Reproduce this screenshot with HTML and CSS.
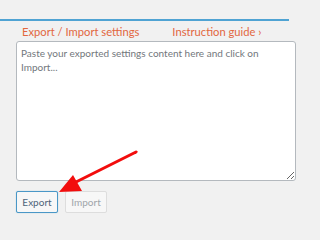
FILE: index.html
```html
<!DOCTYPE html>
<html>
<head>
<meta charset="utf-8">
<link rel="stylesheet" href="styles.css">
</head>
<body>
<div class="page">
  <div class="topbar"></div>
  <div class="tabs">
    <span class="tab">Export / Import settings</span>
    <span class="tab guide">Instruction guide ›</span>
  </div>
  <textarea class="box" placeholder="Paste your exported settings content here and click on Import..."></textarea>
  <div class="actions">
    <button class="btn primary">Export</button>
    <button class="btn" disabled>Import</button>
  </div>
  <svg class="arrow" width="300" height="223" viewBox="0 0 300 223">
    <line x1="136" y1="152" x2="72" y2="184" stroke="#f20d0d" stroke-width="3" stroke-linecap="round"/>
    <polygon points="59,192 73,175 82,191" fill="#f20d0d"/>
  </svg>
</div>
</body>
</html>
```
FILE: styles.css
```css
html, body {
  margin: 0;
  padding: 0;
  background: #f1f1f1;
}
.page {
  position: relative;
  width: 300px;
  height: 223px;
  overflow: hidden;
  font-family: Lato, "Open Sans", "Liberation Sans", sans-serif;
}
.topbar {
  width: 289px;
  height: 19px;
  border-bottom: 2px solid #4fa3d3;
}
.tabs {
  display: flex;
  padding-left: 22px;
  height: 20px;
  align-items: center;
  font-size: 11.2px;
  color: #e2673f;
}
.guide {
  margin-left: 33px;
}
.box {
  display: block;
  box-sizing: border-box;
  margin: 0 0 0 16px;
  width: 280px;
  height: 140px;
  border: 1px solid #b4b9be;
  border-radius: 3px;
  background: #fff;
  padding: 4px 4px;
  font-family: Lato, "Open Sans", "Liberation Sans", sans-serif;
  font-size: 10px;
  line-height: 14px;
  color: #32373c;
}
.box::placeholder {
  color: #72777c;
}
.actions {
  display: flex;
  gap: 7px;
  margin: 10px 0 0 16px;
}
.btn {
  box-sizing: border-box;
  height: 22px;
  width: 42px;
  padding: 0;
  font-family: Lato, "Open Sans", "Liberation Sans", sans-serif;
  font-size: 10px;
  border-radius: 2px;
  border: 1px solid #ddd;
  background: #f7f7f7;
  color: #a0a5aa;
}
.btn.primary {
  border-color: #4a97c7;
  color: #4f6479;
  box-shadow: 0 0 1px 0 rgba(30,140,190,.5);
}
.arrow {
  position: absolute;
  left: 0;
  top: 0;
  pointer-events: none;
}
```
